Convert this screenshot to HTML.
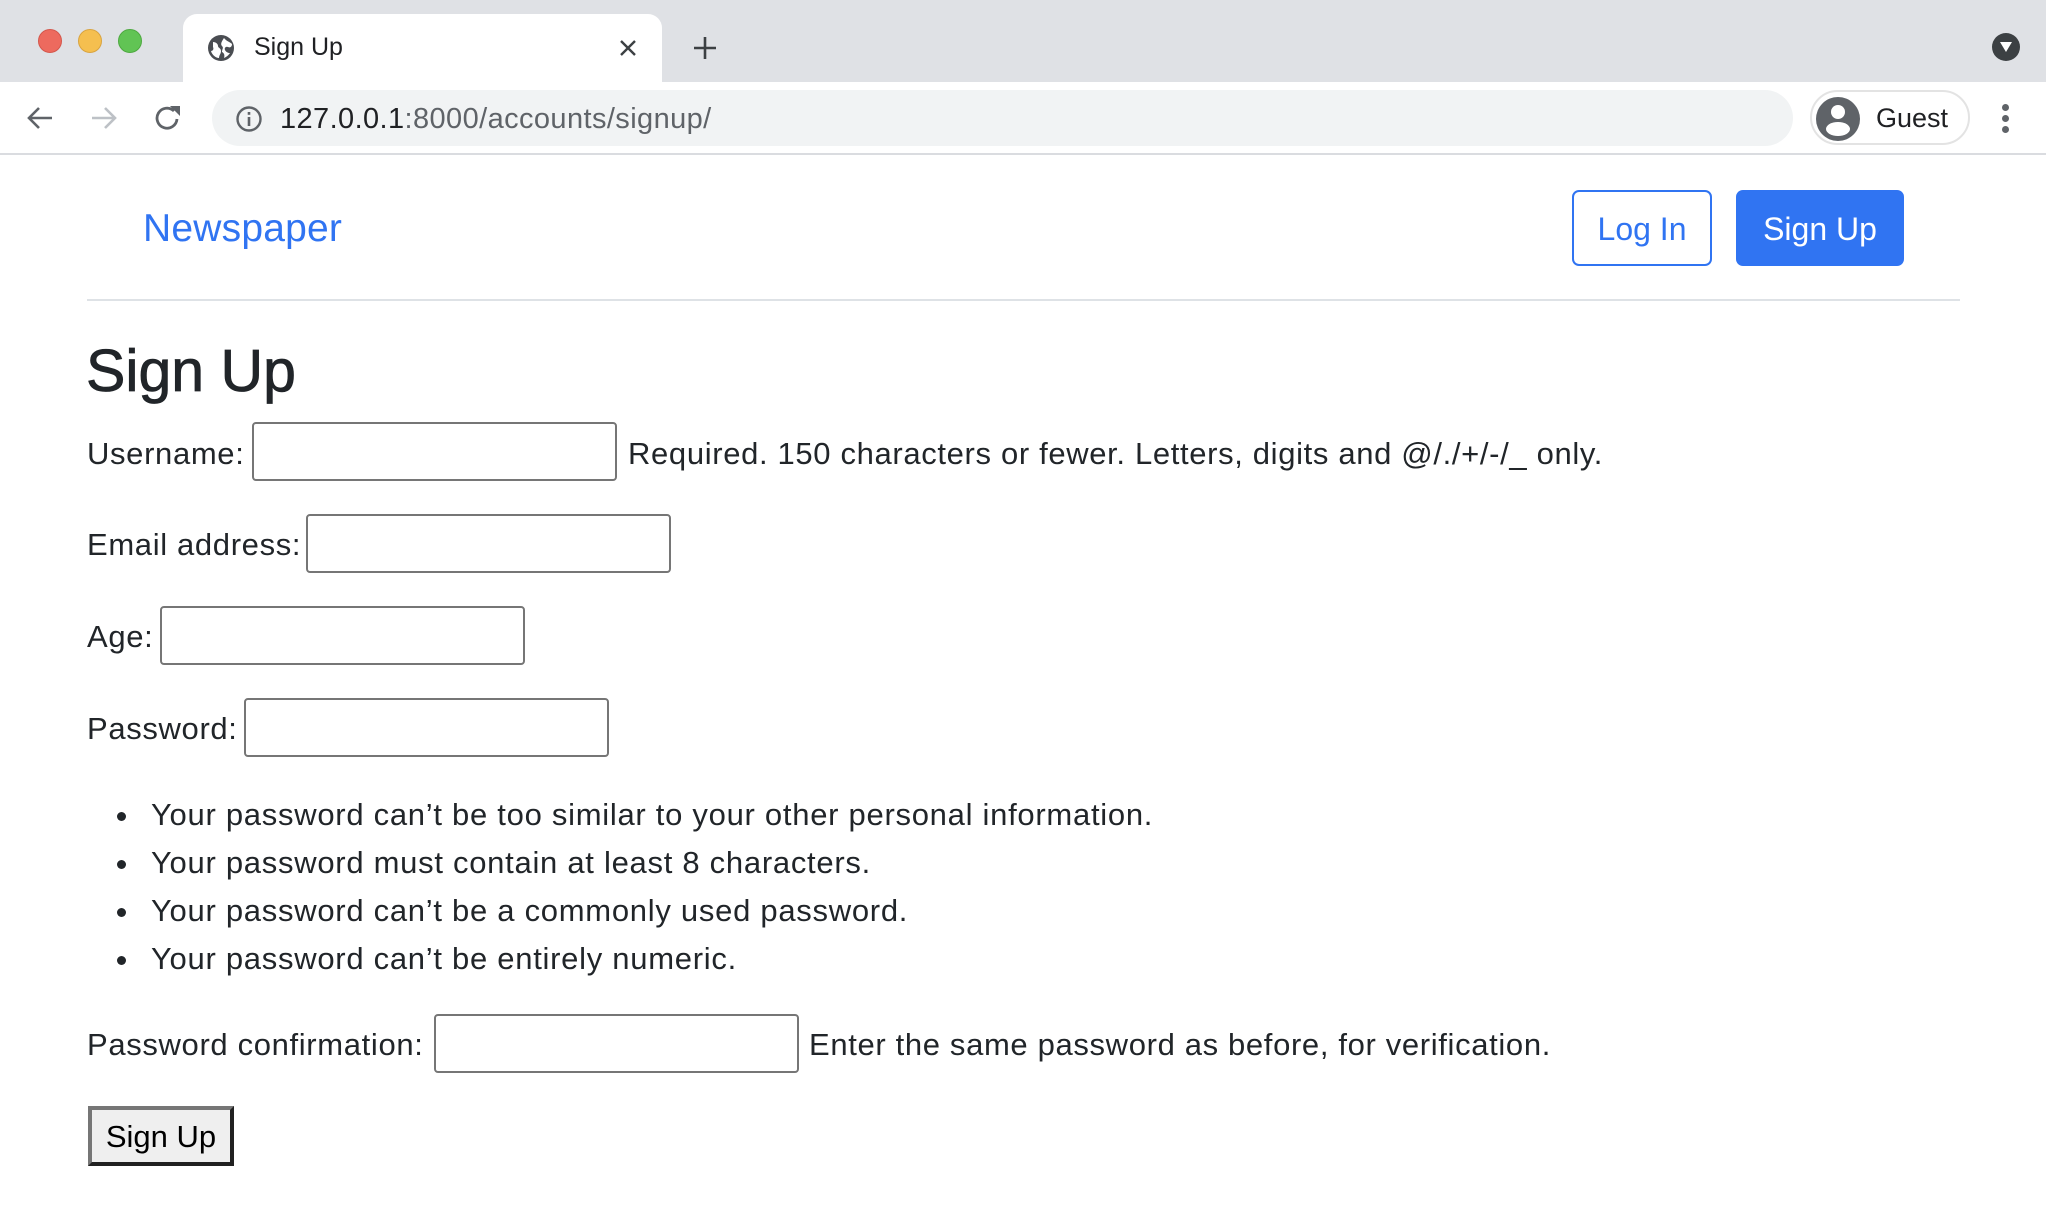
<!DOCTYPE html>
<html><head><meta charset="utf-8">
<style>
*{margin:0;padding:0;box-sizing:border-box}
body{width:2046px;height:1224px;background:#fff;font-family:"Liberation Sans",Arial,sans-serif;color:#212529;position:relative;overflow:hidden}
.a{position:absolute}
.t{position:absolute;font-size:31px;line-height:40px;white-space:nowrap}
.f{letter-spacing:0.65px}
.in{position:absolute;border:2px solid #767676;border-radius:4px;background:#fff;height:59px;width:365px}
.li{position:absolute;font-size:31px;line-height:40px;white-space:nowrap;letter-spacing:0.72px}
.li:before{content:"";position:absolute;left:-34px;top:17px;width:9px;height:9px;border-radius:50%;background:#212529}
</style></head><body>
<div class="a" style="left:0;top:0;width:2046px;height:82px;background:#dfe1e5"></div>
<div class="a" style="left:38px;top:29px;width:24px;height:24px;border-radius:50%;background:#ed6a5e;border:1px solid #d4574c"></div>
<div class="a" style="left:78px;top:29px;width:24px;height:24px;border-radius:50%;background:#f5bf4f;border:1px solid #d9a440"></div>
<div class="a" style="left:118px;top:29px;width:24px;height:24px;border-radius:50%;background:#61c454;border:1px solid #4ea940"></div>
<div class="a" style="left:183px;top:14px;width:479px;height:70px;background:#fff;border-radius:14px 14px 0 0"></div>
<svg class="a" style="left:206px;top:33px" width="30" height="30" viewBox="0 0 30 30"><circle cx="15" cy="15" r="13" fill="#4a4d52"/><path d="M7 9c3 0 5 2 5 4s3 2 3 5-2 4-2 7c-3 0-7-3-8-7 2 0 3-2 2-4 0-2 0-4 0-5zM18 5c2 3 6 4 8 6 0 3-2 4-4 3-2-1-4 1-3 3 1 2 3 3 5 3-2 3-4 4-6 5 1-3 0-5-2-6 0-3 2-4 0-6-2-2 0-5 2-8z" fill="#fff"/></svg>
<div class="t" style="left:254px;top:27px;font-size:25px;line-height:40px;color:#202124">Sign Up</div>
<svg class="a" style="left:618px;top:38px" width="20" height="20" viewBox="0 0 20 20"><path d="M3 3L17 17M17 3L3 17" stroke="#3c4043" stroke-width="2.4"/></svg>
<svg class="a" style="left:692px;top:35px" width="26" height="26" viewBox="0 0 26 26"><path d="M13 2V24M2 13H24" stroke="#3c4043" stroke-width="2.6"/></svg>
<div class="a" style="left:1992px;top:33px;width:28px;height:28px;border-radius:50%;background:#3c4043"></div>
<svg class="a" style="left:1997px;top:40px" width="18" height="14" viewBox="0 0 18 14"><path d="M3 2H15L9 12Z" fill="#fff"/></svg>
<div class="a" style="left:0;top:153px;width:2046px;height:2px;background:#dadce0"></div>
<svg class="a" style="left:24px;top:102px" width="32" height="32" viewBox="0 0 32 32"><path d="M28 16H5M15 6L5 16L15 26" stroke="#5f6368" stroke-width="2.6" fill="none"/></svg>
<svg class="a" style="left:88px;top:102px" width="32" height="32" viewBox="0 0 32 32"><path d="M4 16H27M17 6L27 16L17 26" stroke="#bdc1c6" stroke-width="2.6" fill="none"/></svg>
<svg class="a" style="left:152px;top:102px" width="32" height="32" viewBox="0 0 32 32"><path d="M25 17A10 10 0 1 1 22 9" stroke="#5f6368" stroke-width="2.8" fill="none"/><path d="M18 4H28V14Z" fill="#5f6368"/></svg>
<div class="a" style="left:212px;top:90px;width:1581px;height:56px;background:#f1f3f4;border-radius:28px"></div>
<svg class="a" style="left:234px;top:104px" width="30" height="30" viewBox="0 0 30 30"><circle cx="15" cy="15" r="11.5" stroke="#5f6368" stroke-width="2.4" fill="none"/><rect x="13.7" y="13" width="2.6" height="9" fill="#5f6368"/><rect x="13.7" y="8" width="2.6" height="2.8" fill="#5f6368"/></svg>
<div class="t" style="left:280px;top:99px;font-size:29px;color:#202124;letter-spacing:0.4px">127.0.0.1<span style="color:#5f6368">:8000/accounts/signup/</span></div>
<div class="a" style="left:1810px;top:90px;width:160px;height:55px;border:2px solid #e3e3e3;border-radius:28px"></div>
<svg class="a" style="left:1815px;top:96px" width="46" height="46" viewBox="0 0 46 46"><circle cx="23" cy="23" r="22" fill="#5f6368"/><circle cx="23" cy="16" r="7" fill="#fff"/><ellipse cx="23" cy="33" rx="12" ry="7" fill="#fff"/></svg>
<div class="t" style="left:1876px;top:98px;font-size:27px;color:#202124">Guest</div>
<div class="a" style="left:2002px;top:104px;width:7px;height:7px;border-radius:50%;background:#5f6368"></div>
<div class="a" style="left:2002px;top:115px;width:7px;height:7px;border-radius:50%;background:#5f6368"></div>
<div class="a" style="left:2002px;top:126px;width:7px;height:7px;border-radius:50%;background:#5f6368"></div>
<div class="t" style="left:143px;top:206px;font-size:39px;line-height:46px;color:#3074f2;letter-spacing:0.2px">Newspaper</div>
<div class="a" style="left:1572px;top:190px;width:140px;height:76px;border:2px solid #3074f2;border-radius:7px;color:#3074f2;font-size:32px;line-height:74px;text-align:center">Log In</div>
<div class="a" style="left:1736px;top:190px;width:168px;height:76px;background:#3074f2;border-radius:7px;color:#fff;font-size:32px;line-height:78px;text-align:center">Sign Up</div>
<div class="a" style="left:87px;top:299px;width:1873px;height:2px;background:#dee2e6"></div>
<div class="t" style="left:86px;top:335px;font-size:59px;line-height:72px;font-weight:500;-webkit-text-stroke:0.8px #212529">Sign Up</div>
<div class="t f" style="left:87px;top:434px">Username:</div>
<div class="in" style="left:252px;top:422px"></div>
<div class="t f" style="left:628px;top:434px">Required. 150 characters or fewer. Letters, digits and @/./+/-/_ only.</div>
<div class="t f" style="left:87px;top:525px">Email address:</div>
<div class="in" style="left:306px;top:514px"></div>
<div class="t f" style="left:87px;top:617px">Age:</div>
<div class="in" style="left:160px;top:606px"></div>
<div class="t f" style="left:87px;top:709px">Password:</div>
<div class="in" style="left:244px;top:698px"></div>
<div class="li" style="left:151px;top:795px">Your password can’t be too similar to your other personal information.</div>
<div class="li" style="left:151px;top:843px">Your password must contain at least 8 characters.</div>
<div class="li" style="left:151px;top:891px">Your password can’t be a commonly used password.</div>
<div class="li" style="left:151px;top:939px">Your password can’t be entirely numeric.</div>
<div class="t f" style="left:87px;top:1025px">Password confirmation:</div>
<div class="in" style="left:434px;top:1014px"></div>
<div class="t f" style="left:809px;top:1025px">Enter the same password as before, for verification.</div>
<div class="a" style="left:88px;top:1106px;width:146px;height:60px;background:#efefef;border:4px outset #767676;color:#000;font-size:31px;line-height:54px;text-align:center">Sign Up</div>
</body></html>
